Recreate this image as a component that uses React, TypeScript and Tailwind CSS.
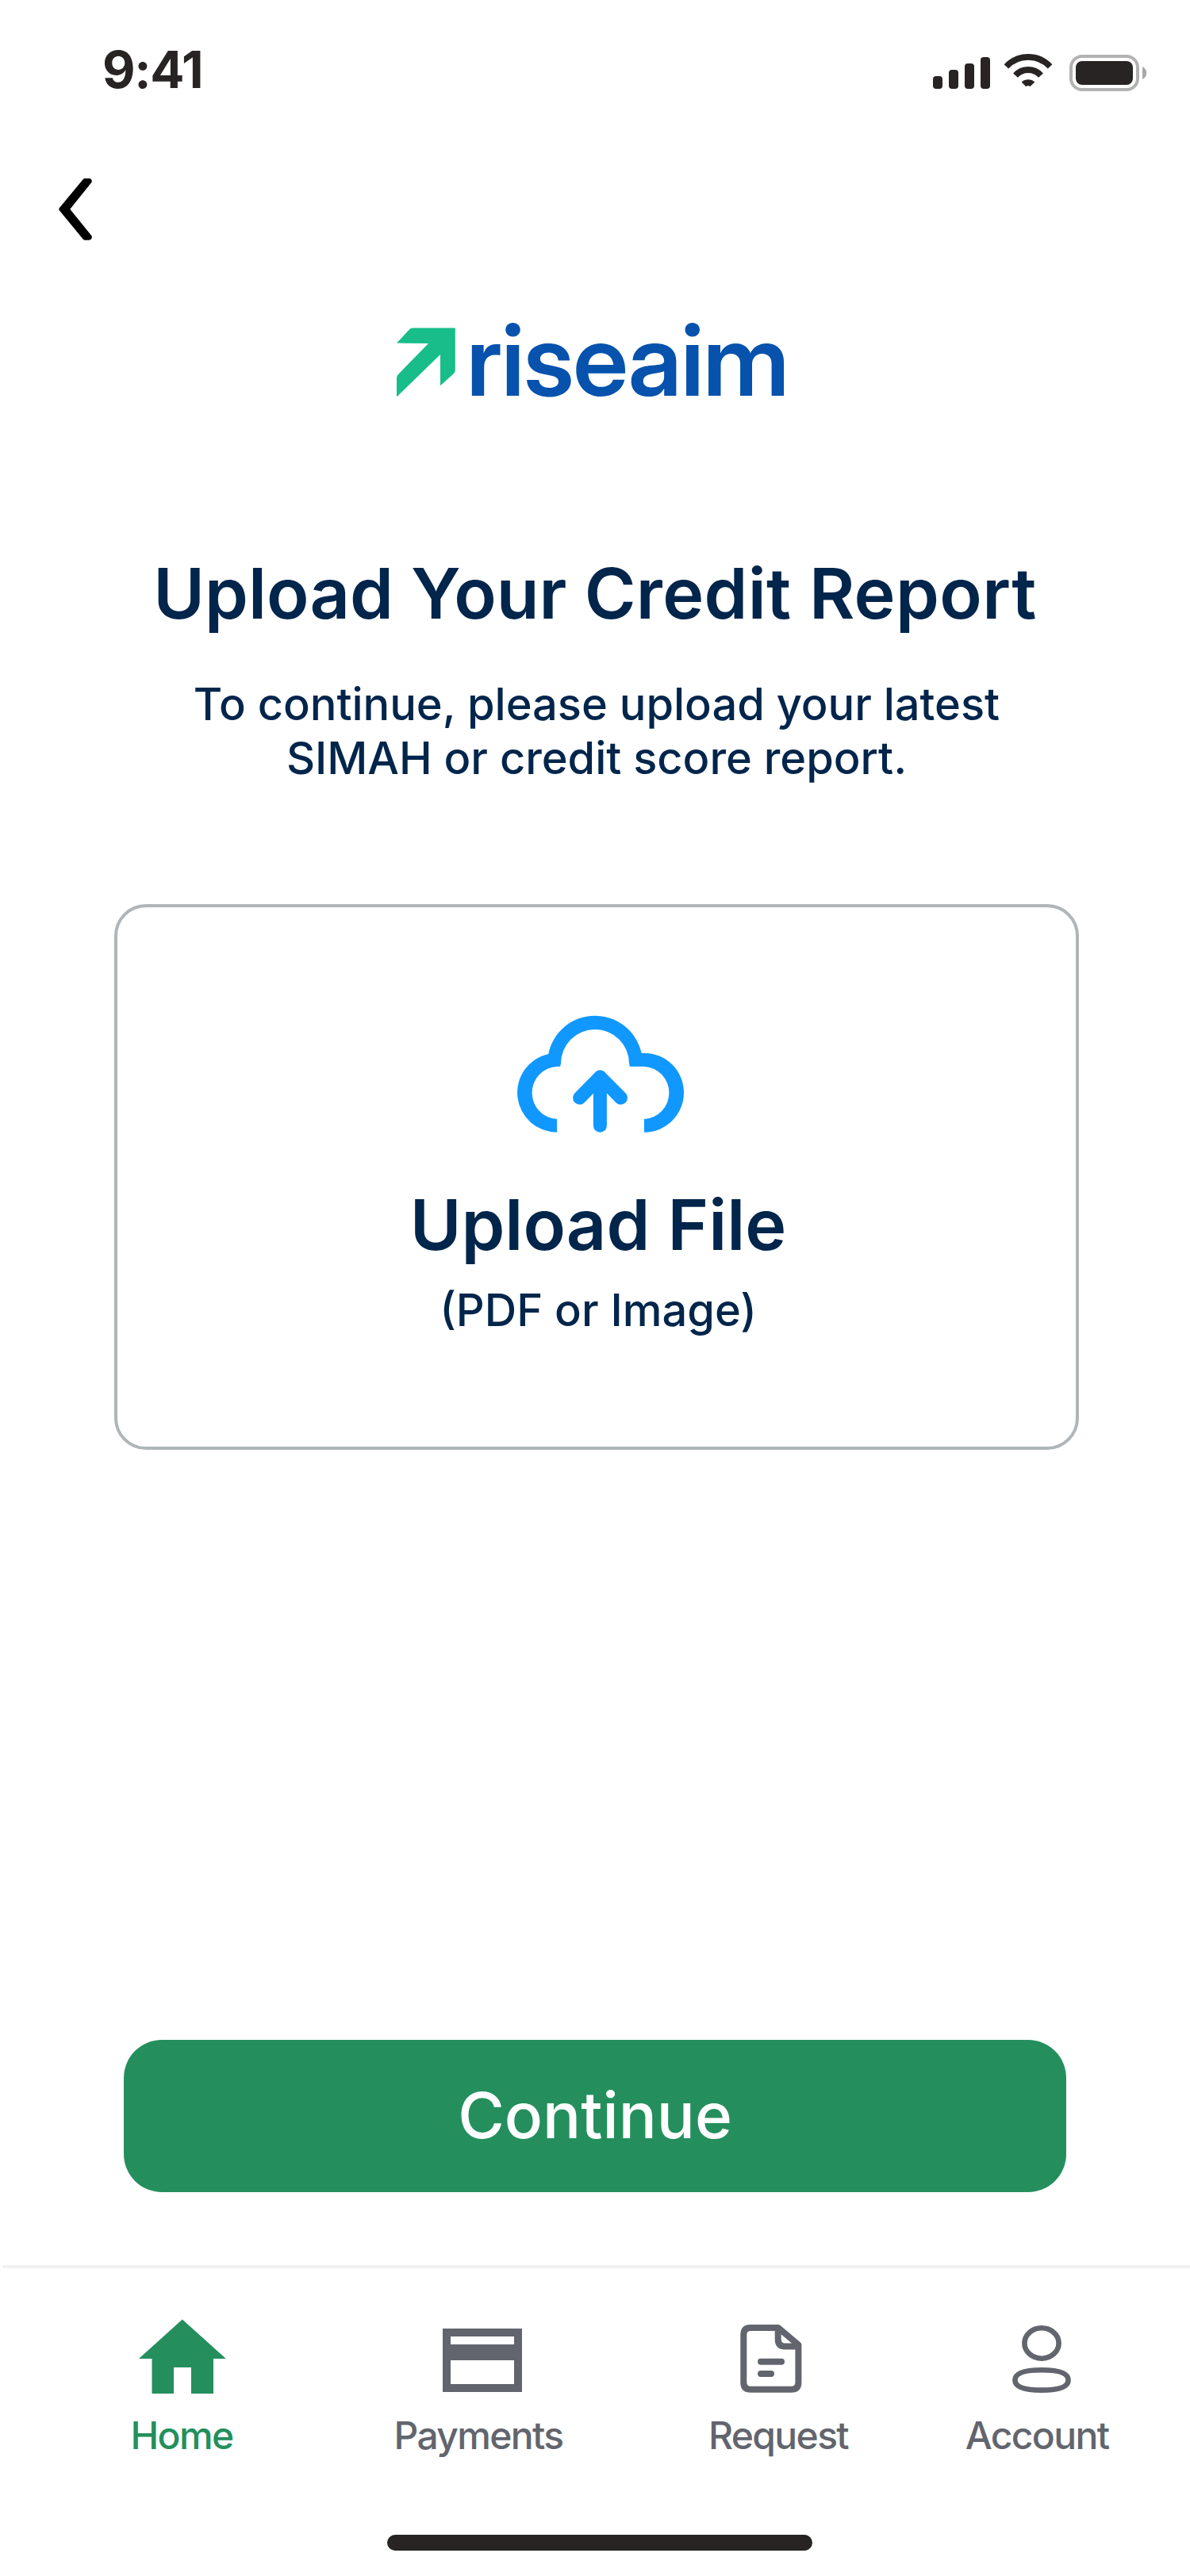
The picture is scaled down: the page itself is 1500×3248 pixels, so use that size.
import React from "react";

function StatusBar() {
  return (
    <header className="flex h-[225px] shrink-0 items-start pl-[129px] text-[#282424]">
      <div className="mt-12 w-[1047px] text-[64px] leading-[80px] font-bold tracking-[-1.3px]">9:41</div>
      <svg className="mt-[72px] h-10 w-[72px]" viewBox="0 0 72 40" fill="currentColor">
        <rect x="0" y="24" width="12" height="16" rx="4" />
        <rect x="20" y="16" width="12" height="24" rx="4" />
        <rect x="40" y="8" width="12" height="32" rx="4" />
        <rect x="60" y="0" width="12" height="40" rx="4" />
      </svg>
      <svg className="mt-16 ml-4 h-12 w-16" viewBox="1264 64 64 48" fill="none" stroke="currentColor">
        <path d="M1268.4 83.8 A37.8 37.8 0 0 1 1323.6 83.8" strokeWidth="7.6" />
        <path d="M1280 95.1 A21.6 21.6 0 0 1 1312 95.1" strokeWidth="8" />
        <path d="M1287.7 103.6 A12 12 0 0 1 1304.3 103.6 L1298.6 108.9 L1296 108 L1293 108.9 Z" fill="currentColor" stroke="none" />
      </svg>
      <svg className="mt-16 ml-5 h-14 w-[100px]" viewBox="1348 64 100 56" fill="none">
        <rect x="1350" y="71" width="84" height="42" rx="14" stroke="#b3b2b2" strokeWidth="4" />
        <rect x="1356" y="77" width="72" height="30" rx="8" fill="currentColor" />
        <path d="M1440 84 C1447 87 1447 97 1440 100 Z" fill="#a9a7a7" />
      </svg>
    </header>
  );
}

function Logo() {
  return (
    <div className="mt-[91px] ml-[500px] flex h-[149px] shrink-0 items-start">
      <svg className="mt-[19px] h-[88px] w-[74px]" viewBox="0 0 74 88" fill="#18bd89">
        <path d="M0 19.6 L15.5 3 Q17.8 .6 20.5 .6 H73.8 V53 Q73.8 56 72 58 L55 73.3 V34 L0 87.5 V63.5 Q0 61 2 59 L40 20 Z" />
      </svg>
      <div className="ml-[14px] font-['Inter_Display','Inter',sans-serif] text-[125px] leading-[120px] font-semibold tracking-[-0.9px] text-[#0652ad]">
        riseaim
      </div>
    </div>
  );
}

function CloudUpload() {
  return (
    <svg className="h-[152px] w-[216px]" viewBox="29 28 216 152" fill="none">
      <path
        fill="#1098ff"
        d="M82 177.7 A50 50 0 0 1 71.2 78.9 A60 60 0 0 1 188.6 77.7 H192 A50 50 0 0 1 192 177.7 V161 A33.2 33.2 0 0 0 192 94.7 H174 L173 91 A43 43 0 0 0 87 91 L86 94.7 H82 A33.2 33.2 0 0 0 82 161 Z"
      />
      <path d="M136.4 169.3 V107.7 M110.6 134.2 L136.4 107.9 L162.5 134.2" stroke="#1098ff" strokeWidth="17" strokeLinecap="round" strokeLinejoin="round" />
    </svg>
  );
}

function NavItem({ label, className, viewBox, children }: { label: string; className: string; viewBox: string; children: React.ReactNode }) {
  return (
    <div className={"flex w-60 flex-col items-center " + className}>
      <svg className="h-[104px] w-60" viewBox={viewBox} fill="none">
        {children}
      </svg>
      <span className="mt-[19px] text-[48px] leading-[56px] font-medium tracking-[-1.63px]">{label}</span>
    </div>
  );
}

function BottomNav() {
  return (
    <nav className="ml-1 flex h-[340px] shrink-0 items-start border-t-4 border-[#f2f2f2] pt-[60px] text-[#62656d]">
      <NavItem label="Home" className="ml-[105px] text-[#248f5d]" viewBox="109 2920 240 104">
        <path d="M229.8 2924.5 L284.8 2974 H269 V3018 H241 V2985 H219 V3018 H191.5 V2974 H175 Z" fill="currentColor" />
      </NavItem>
      <NavItem label="Payments" className="ml-[134px]" viewBox="483 2920 240 104">
        <path fillRule="evenodd" fill="currentColor" d="M558 2936 H658 V3016 H558 Z M568 2946 V2956 H648 V2946 Z M568 2976 V3006 H648 V2976 Z" />
      </NavItem>
      <NavItem label="Request" className="ml-[138px]" viewBox="861 2920 240 104">
        <g stroke="currentColor" strokeWidth="8" strokeLinecap="round" strokeLinejoin="round">
          <path d="M946 2935 H981 L1006.4 2956.5 V3004 Q1006.4 3012.7 997.5 3012.7 H946 Q937.3 3012.7 937.3 3004 V2944 Q937.3 2935 946 2935 Z" />
          <path d="M980.7 2936 V2949.5 Q980.7 2958.5 989.5 2958.5 H1005" />
          <path d="M959 2977.8 H985 M959 2993 H972" />
        </g>
      </NavItem>
      <NavItem label="Account" className="ml-[86px]" viewBox="1187 2920 240 104">
        <g stroke="currentColor" strokeWidth="6.6">
          <ellipse cx="1313" cy="2954.5" rx="21.6" ry="19.2" />
          <path d="M1313 2988.3 C1333 2988.3 1346.6 2991.5 1346.6 3001 C1346.6 3010.5 1333 3013.6 1313 3013.6 C1293 3013.6 1279.4 3010.5 1279.4 3001 C1279.4 2991.5 1293 2988.3 1313 2988.3 Z" />
        </g>
      </NavItem>
    </nav>
  );
}

export default function App() {
  return (
    <div className="flex h-[3248px] w-[1500px] flex-col overflow-hidden bg-white font-['Inter',sans-serif]">
      <StatusBar />
      <button className="ml-[74px] h-[78px] w-[44px] shrink-0">
        <svg className="h-[78px] w-[44px]" viewBox="74 225 44 78" fill="black">
          <path d="M104.4 226.4 Q105.6 225 107.5 225 H112 Q116.6 225.5 115.6 229.8 L88.3 263.7 L115.6 297.6 Q116.8 302.2 112 302.7 H107.5 Q105.6 302.7 104.4 301.2 L75 265.5 Q73.6 263.7 75 262 Z" />
        </svg>
      </button>
      <Logo />
      <h1 className="mt-[152px] shrink-0 text-center text-[88px] leading-[106px] font-semibold whitespace-nowrap text-[#02254b]">
        Upload Your <span className="tracking-[0.3px]">Credit </span>
        <span className="tracking-[0.4px]">Report</span>
      </h1>
      <p className="mt-[53px] shrink-0 pl-1 text-center text-[56px] leading-[68px] font-medium tracking-[-0.03px] text-[#02254b]">
        To continue, please upload your latest
        <br />
        SIMAH or credit score report.
      </p>
      <button className="mt-[150px] ml-36 flex h-[688px] w-[1216px] shrink-0 flex-col items-center rounded-[40px] border-4 border-[#b0b5b8] pt-[134px] text-[#02254b]">
        <div className="pl-[10px]">
          <CloudUpload />
        </div>
        <span className="mt-[61px] pl-1 text-[88px] leading-[106px] font-semibold">Upload File</span>
        <span className="mt-[21px] pl-1 text-[56px] leading-[68px] font-medium">(PDF or Image)</span>
      </button>
      <button className="mt-[744px] ml-[156px] flex h-48 w-[1188px] shrink-0 items-center justify-center rounded-[48px] bg-[#248f5d] pb-[2px] text-[80px] leading-[96px] font-medium text-white">
        Continue
      </button>
      <div className="h-[92px] shrink-0" />
      <BottomNav />
      <div className="ml-[488px] h-5 w-[536px] shrink-0 rounded-full bg-[#282424]" />
    </div>
  );
}
